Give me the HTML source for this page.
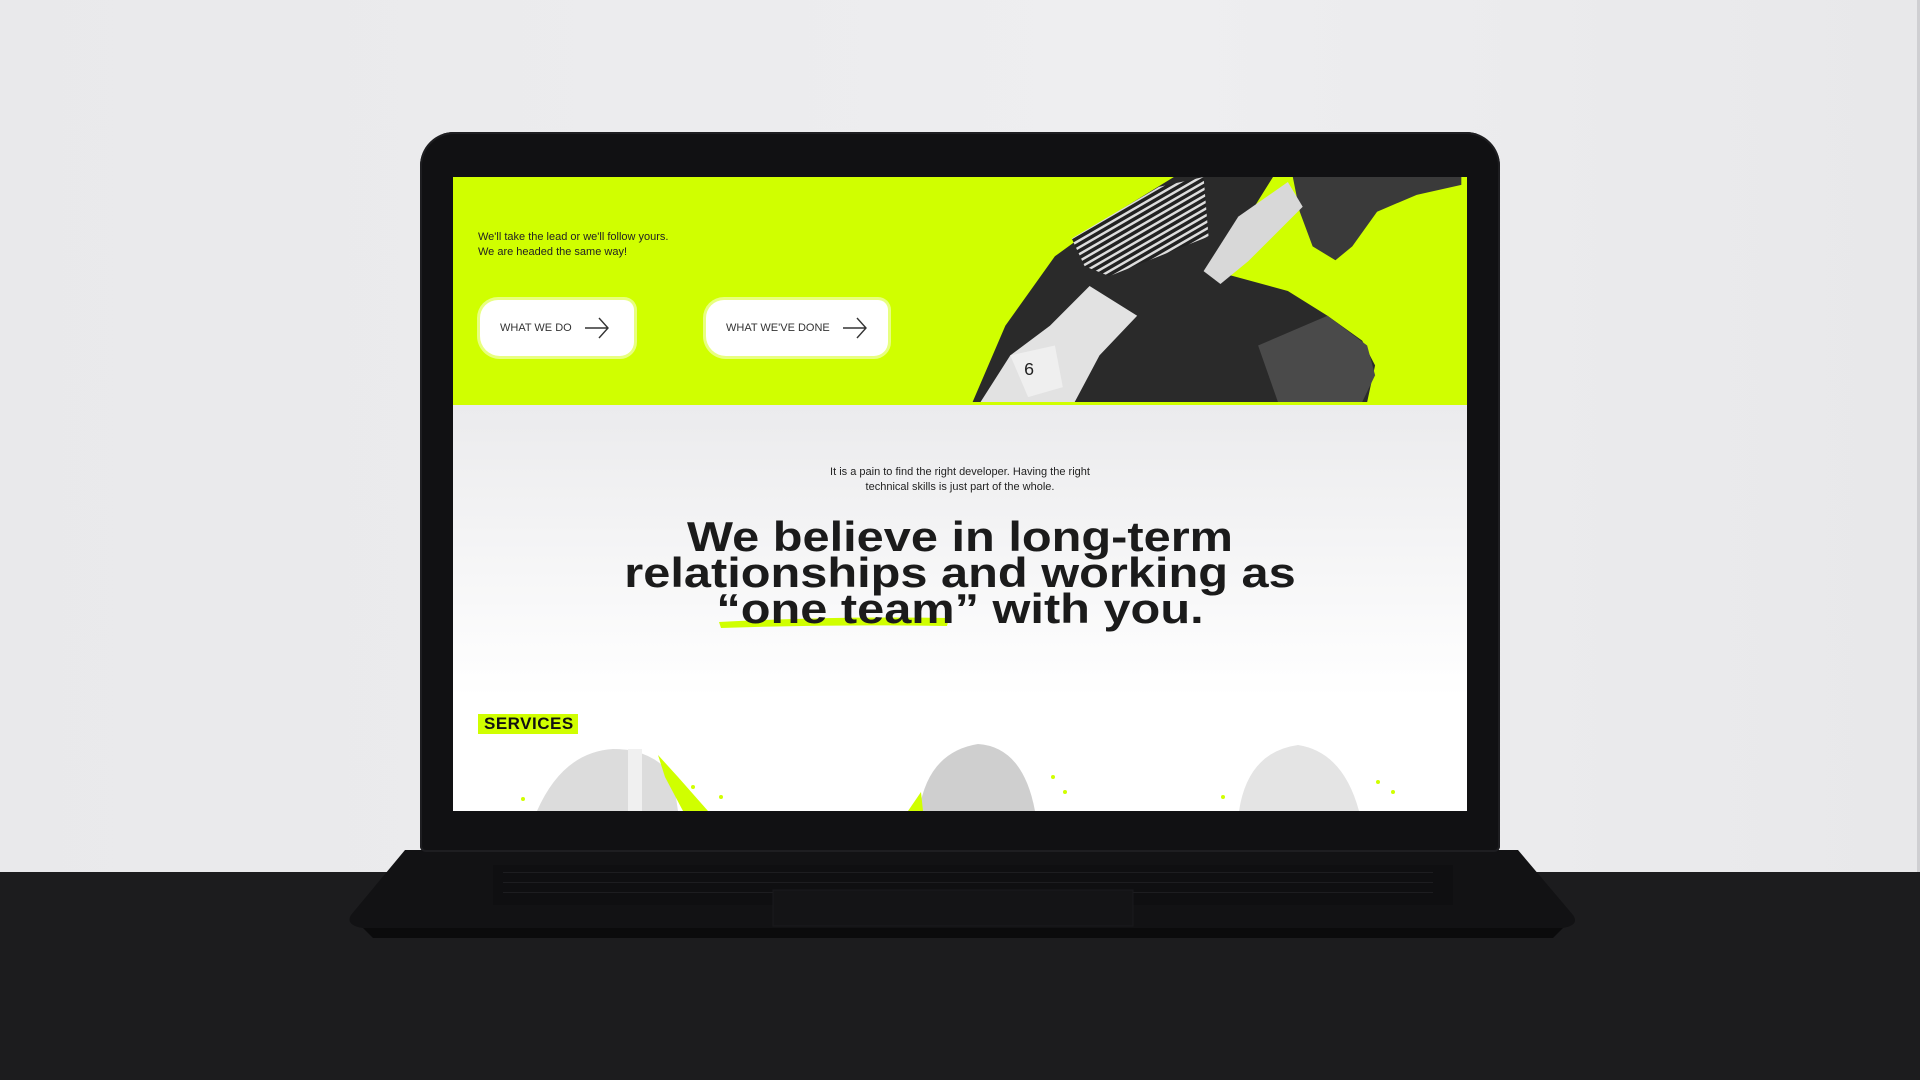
<!DOCTYPE html>
<html><head><meta charset="utf-8"><style>
*{margin:0;padding:0;box-sizing:border-box}
body{width:1920px;height:1080px;overflow:hidden;background:#1c1c1e;position:relative;font-family:"Liberation Sans",sans-serif}
.wall{position:absolute;left:0;top:0;width:1920px;height:872px;background:linear-gradient(90deg,#e9e9eb,#eeeef0 60%,#e8e8ea)}
.wall:after{content:"";position:absolute;right:0;top:0;width:3px;height:100%;background:#cfcfd2}
.lid{position:absolute;left:420px;top:132px;width:1080px;height:720px;background:#111113;border-radius:34px 34px 6px 6px;box-shadow:inset 0 0 0 2px #1e1e21}
.base{position:absolute;left:343px;top:850px;width:1237px;height:93px}
.screen{position:absolute;left:453px;top:177px;width:1014px;height:634px;overflow:hidden;background:linear-gradient(#ebebed 230px,#fff 520px)}
.hero{position:absolute;left:0;top:0;width:1014px;height:228px;background:#d0ff00}
.sm{position:absolute;font-size:11px;line-height:15px;color:#222}
.btn{position:absolute;height:56px;background:#fff;border-radius:18px 10px 14px 20px;font-size:11px;color:#333;display:flex;align-items:center;padding-left:20px;white-space:nowrap;box-shadow:0 0 0 3px rgba(255,255,255,.5)}
.btn svg{margin-left:12px;flex:none}
h1{position:absolute;left:0;width:1014px;top:342px;text-align:center;font-size:42px;line-height:36px;font-weight:bold;color:#1b1b1b;letter-spacing:0;transform:scaleX(1.16)}
.svc{position:absolute;left:25px;top:537px;width:100px;height:20px;background:#d0ff00;font-weight:bold;font-size:17px;line-height:20px;padding-left:6px;color:#111;letter-spacing:.5px}
</style></head><body>
<div class="wall"></div>
<svg class="base" viewBox="0 0 1237 93">
<path d="M62 0 L1175 0 L1230 65 Q1237 75 1220 78 L20 78 Q2 75 8 65 Z" fill="#121214"/>
<path d="M20 78 L1220 78 L1210 88 L30 88 Z" fill="#0b0b0c"/>
<rect x="150" y="15" width="960" height="40" fill="#0f0f11"/>
<g fill="#1d1d20"><rect x="160" y="22" width="930" height="1"/><rect x="160" y="32" width="930" height="1"/><rect x="160" y="42" width="930" height="1"/></g>
<rect x="430" y="40" width="360" height="36" fill="#141416" stroke="#1a1a1d"/>
</svg>
<div class="lid"></div>
<div class="screen">
 <div class="hero">
  <div class="sm" style="left:25px;top:53px">We'll take the lead or we'll follow yours.<br>We are headed the same way!</div>
  <div class="btn" style="left:27px;top:123px;width:154px">WHAT WE DO<svg width="26" height="26" viewBox="0 0 26 26"><path d="M1 13H24M15 3L24 13L15 23" stroke="#333" stroke-width="1.4" fill="none"/></svg></div>
  <div class="btn" style="left:253px;top:123px;width:182px">WHAT WE'VE DONE<svg width="26" height="26" viewBox="0 0 26 26"><path d="M1 13H24M15 3L24 13L15 23" stroke="#333" stroke-width="1.4" fill="none"/></svg></div>
  <svg style="position:absolute;left:507px;top:0" width="507" height="228" viewBox="0 0 510 230">
   <defs><pattern id="st" width="6" height="6" patternUnits="userSpaceOnUse" patternTransform="rotate(60)"><rect width="6" height="6" fill="#222"/><rect width="2.5" height="6" fill="#ddd"/></pattern></defs>
   <path d="M335 0 L505 0 L505 8 L460 18 L420 35 L395 70 L378 84 L355 70 L342 35 Z" fill="#3a3a3a"/>
   <path d="M12 227 L45 150 L95 80 L150 40 L215 0 L315 0 L290 40 L255 95 L275 100 L330 115 L370 140 L405 165 L418 190 L410 227 Z" fill="#2a2a2a"/>
   <path d="M112 62 L200 10 L245 0 L250 60 L150 100 L125 90 Z" fill="url(#st)"/>
   <path d="M245 95 L280 40 L330 5 L345 30 L290 85 L262 108 Z" fill="#d8d8d8"/>
   <path d="M20 227 L50 180 L90 150 L130 110 L178 140 L140 180 L115 227 Z" fill="#e2e2e2"/>
   <path d="M50 180 L95 170 L103 212 L68 222 Z" fill="#efefef"/>
   <text x="64" y="200" font-size="18" font-family="Liberation Sans" fill="#222">6</text>
   <path d="M300 170 L370 140 L410 170 L418 200 L405 227 L320 227 Z" fill="#4a4a4a"/>
  </svg>
 </div>
 <div class="sm" style="left:0;width:1014px;text-align:center;top:288px;line-height:15px">It is a pain to find the right developer. Having the right<br>technical skills is just part of the whole.</div>
 <svg style="position:absolute;left:262px;top:433px" width="240" height="20"><path d="M4 12 Q120 6 234 8 L232 16 Q120 14 6 18 Z" fill="#d0ff00"/></svg>
 <h1>We believe in long-term<br>relationships and working as<br>“one team” with you.</h1>
 <div class="svc">SERVICES</div>
 <svg style="position:absolute;left:0;top:560px" width="1014" height="74">
  <path d="M84 74 Q110 15 160 12 Q200 12 220 40 L225 74 Z" fill="#dcdcdc"/>
  <path d="M205 18 L225 40 L255 74 L230 74 L212 40 Z" fill="#d0ff00"/>
  <rect x="175" y="12" width="14" height="62" fill="#f0f0f0"/>
  <path d="M466 74 Q475 15 525 7 Q570 10 582 74 Z" fill="#cfcfcf"/>
  <path d="M455 74 L468 55 L470 74 Z" fill="#d0ff00"/>
  <path d="M786 74 Q795 15 845 8 Q890 15 906 74 Z" fill="#e4e4e4"/>
  <g fill="#d0ff00"><circle cx="70" cy="62" r="2"/><circle cx="240" cy="50" r="2"/><circle cx="268" cy="60" r="2"/><circle cx="600" cy="40" r="2"/><circle cx="612" cy="55" r="2"/><circle cx="770" cy="60" r="2"/><circle cx="925" cy="45" r="2"/><circle cx="940" cy="55" r="2"/></g>
 </svg>
</div>
</body></html>
